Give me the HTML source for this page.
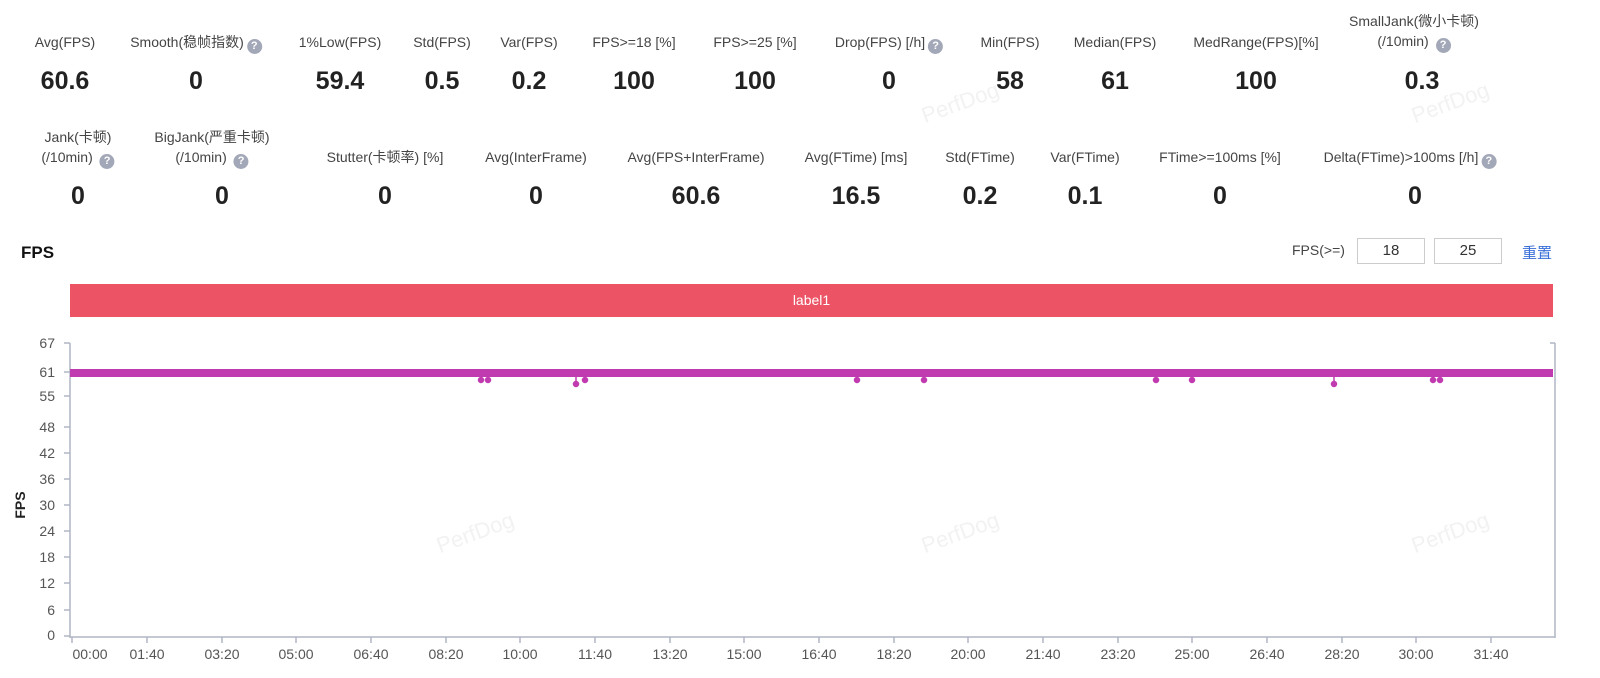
<!DOCTYPE html>
<html><head><meta charset="utf-8"><style>
body{margin:0;width:1600px;height:678px;background:#fff;position:relative;overflow:hidden;font-family:"Liberation Sans","Noto Sans CJK SC",sans-serif;color:#333}
.l,.v{position:absolute;transform:translateX(-50%);white-space:nowrap;text-align:center}
.l{font-size:14px;color:#444;line-height:20px}
.v{font-size:25px;font-weight:bold;color:#222}
.q{display:inline-block;width:15px;height:15px;border-radius:50%;background:#a3a8b8;color:#fff;font-size:11px;line-height:15px;font-weight:bold;text-align:center;vertical-align:-2px;margin-left:3px}
.yl{position:absolute;right:1545px;font-size:14px;color:#555;transform:translateY(-50%)}
.xl{position:absolute;top:646px;font-size:14px;color:#555;transform:translateX(-50%)}
.in{position:absolute;top:238px;width:66px;height:24px;border:1px solid #ccc;text-align:center;font-size:15px;line-height:24px}
.wm{position:absolute;color:#f2f2f2;font-size:22px;transform:rotate(-20deg)}
</style></head><body>
<div class="wm" style="left:920px;top:90px">PerfDog</div>
<div class="wm" style="left:1410px;top:90px">PerfDog</div>
<div class="wm" style="left:435px;top:520px">PerfDog</div>
<div class="wm" style="left:920px;top:520px">PerfDog</div>
<div class="wm" style="left:1410px;top:520px">PerfDog</div>

<div class="l" style="left:65px;top:32px">Avg(FPS)</div><div class="v" style="left:65px;top:67px">60.6</div>
<div class="l" style="left:196px;top:32px">Smooth(稳帧指数)<span class="q">?</span></div><div class="v" style="left:196px;top:67px">0</div>
<div class="l" style="left:340px;top:32px">1%Low(FPS)</div><div class="v" style="left:340px;top:67px">59.4</div>
<div class="l" style="left:442px;top:32px">Std(FPS)</div><div class="v" style="left:442px;top:67px">0.5</div>
<div class="l" style="left:529px;top:32px">Var(FPS)</div><div class="v" style="left:529px;top:67px">0.2</div>
<div class="l" style="left:634px;top:32px">FPS&gt;=18 [%]</div><div class="v" style="left:634px;top:67px">100</div>
<div class="l" style="left:755px;top:32px">FPS&gt;=25 [%]</div><div class="v" style="left:755px;top:67px">100</div>
<div class="l" style="left:889px;top:32px">Drop(FPS) [/h]<span class="q">?</span></div><div class="v" style="left:889px;top:67px">0</div>
<div class="l" style="left:1010px;top:32px">Min(FPS)</div><div class="v" style="left:1010px;top:67px">58</div>
<div class="l" style="left:1115px;top:32px">Median(FPS)</div><div class="v" style="left:1115px;top:67px">61</div>
<div class="l" style="left:1256px;top:32px">MedRange(FPS)[%]</div><div class="v" style="left:1256px;top:67px">100</div>
<div class="l" style="left:1414px;top:11px">SmallJank(微小卡顿)<br>(/10min) <span class="q">?</span></div><div class="v" style="left:1422px;top:67px">0.3</div>

<div class="l" style="left:78px;top:127px">Jank(卡顿)<br>(/10min) <span class="q">?</span></div><div class="v" style="left:78px;top:182px">0</div>
<div class="l" style="left:212px;top:127px">BigJank(严重卡顿)<br>(/10min) <span class="q">?</span></div><div class="v" style="left:222px;top:182px">0</div>
<div class="l" style="left:385px;top:147px">Stutter(卡顿率) [%]</div><div class="v" style="left:385px;top:182px">0</div>
<div class="l" style="left:536px;top:147px">Avg(InterFrame)</div><div class="v" style="left:536px;top:182px">0</div>
<div class="l" style="left:696px;top:147px">Avg(FPS+InterFrame)</div><div class="v" style="left:696px;top:182px">60.6</div>
<div class="l" style="left:856px;top:147px">Avg(FTime) [ms]</div><div class="v" style="left:856px;top:182px">16.5</div>
<div class="l" style="left:980px;top:147px">Std(FTime)</div><div class="v" style="left:980px;top:182px">0.2</div>
<div class="l" style="left:1085px;top:147px">Var(FTime)</div><div class="v" style="left:1085px;top:182px">0.1</div>
<div class="l" style="left:1220px;top:147px">FTime&gt;=100ms [%]</div><div class="v" style="left:1220px;top:182px">0</div>
<div class="l" style="left:1410px;top:147px">Delta(FTime)&gt;100ms [/h]<span class="q">?</span></div><div class="v" style="left:1415px;top:182px">0</div>

<div style="position:absolute;left:21px;top:243px;font-size:17px;font-weight:bold;color:#111">FPS</div>
<div style="position:absolute;left:1292px;top:242px;font-size:14px;color:#444">FPS(&gt;=)</div>
<div class="in" style="left:1357px">18</div>
<div class="in" style="left:1434px">25</div>
<div style="position:absolute;left:1522px;top:242px;font-size:15px;color:#3a6fd8">重置</div>
<div style="position:absolute;left:70px;top:284px;width:1483px;height:33px;background:#ec5466;color:#fff;font-size:14px;text-align:center;line-height:33px">label1</div>

<svg style="position:absolute;left:0;top:0" width="1600" height="678">
<g stroke="#b0b6c4" stroke-width="1.5" fill="none">
<line x1="70" y1="343" x2="70" y2="638"/><line x1="70" y1="637" x2="1555" y2="637"/>
<path d="M1555 343h-5M1555 343v295"/>
</g>
<g stroke="#b0b6c4" stroke-width="1.5">
<line x1="64" y1="343" x2="70" y2="343"/><line x1="64" y1="372" x2="70" y2="372"/><line x1="64" y1="396" x2="70" y2="396"/><line x1="64" y1="427" x2="70" y2="427"/><line x1="64" y1="453" x2="70" y2="453"/><line x1="64" y1="479" x2="70" y2="479"/><line x1="64" y1="505" x2="70" y2="505"/><line x1="64" y1="531" x2="70" y2="531"/><line x1="64" y1="557" x2="70" y2="557"/><line x1="64" y1="583" x2="70" y2="583"/><line x1="64" y1="610" x2="70" y2="610"/><line x1="64" y1="636" x2="70" y2="636"/>
<path d="M72 637v6M147 637v6M222 637v6M296 637v6M371 637v6M446 637v6M520 637v6M595 637v6M670 637v6M744 637v6M819 637v6M894 637v6M968 637v6M1043 637v6M1118 637v6M1192 637v6M1267 637v6M1342 637v6M1416 637v6M1491 637v6"/>
</g>
<rect x="70" y="369" width="1483" height="8" fill="#c13bb0"/>
<g fill="#c13bb0" stroke="#c13bb0" stroke-width="1.5">
<circle cx="481" cy="380" r="2.5"/><circle cx="488" cy="380" r="2.5"/>
<line x1="576" y1="376" x2="576" y2="384"/><circle cx="576" cy="384" r="2.5"/><circle cx="585" cy="380" r="2.5"/>
<circle cx="857" cy="380" r="2.5"/><circle cx="924" cy="380" r="2.5"/><circle cx="1156" cy="380" r="2.5"/><circle cx="1192" cy="380" r="2.5"/>
<line x1="1334" y1="376" x2="1334" y2="384"/><circle cx="1334" cy="384" r="2.5"/><circle cx="1433" cy="380" r="2.5"/><circle cx="1440" cy="380" r="2.5"/>
</g>
<text x="25" y="505" transform="rotate(-90 25 505)" font-size="14" font-weight="bold" fill="#222" text-anchor="middle" font-family="Liberation Sans">FPS</text>
</svg>
<div class="yl" style="top:343px">67</div><div class="yl" style="top:372px">61</div><div class="yl" style="top:396px">55</div><div class="yl" style="top:427px">48</div><div class="yl" style="top:453px">42</div><div class="yl" style="top:479px">36</div><div class="yl" style="top:505px">30</div><div class="yl" style="top:531px">24</div><div class="yl" style="top:557px">18</div><div class="yl" style="top:583px">12</div><div class="yl" style="top:610px">6</div><div class="yl" style="top:635px">0</div>
<div class="xl" style="left:90px">00:00</div><div class="xl" style="left:147px">01:40</div><div class="xl" style="left:222px">03:20</div><div class="xl" style="left:296px">05:00</div><div class="xl" style="left:371px">06:40</div><div class="xl" style="left:446px">08:20</div><div class="xl" style="left:520px">10:00</div><div class="xl" style="left:595px">11:40</div><div class="xl" style="left:670px">13:20</div><div class="xl" style="left:744px">15:00</div><div class="xl" style="left:819px">16:40</div><div class="xl" style="left:894px">18:20</div><div class="xl" style="left:968px">20:00</div><div class="xl" style="left:1043px">21:40</div><div class="xl" style="left:1118px">23:20</div><div class="xl" style="left:1192px">25:00</div><div class="xl" style="left:1267px">26:40</div><div class="xl" style="left:1342px">28:20</div><div class="xl" style="left:1416px">30:00</div><div class="xl" style="left:1491px">31:40</div>
</body></html>
